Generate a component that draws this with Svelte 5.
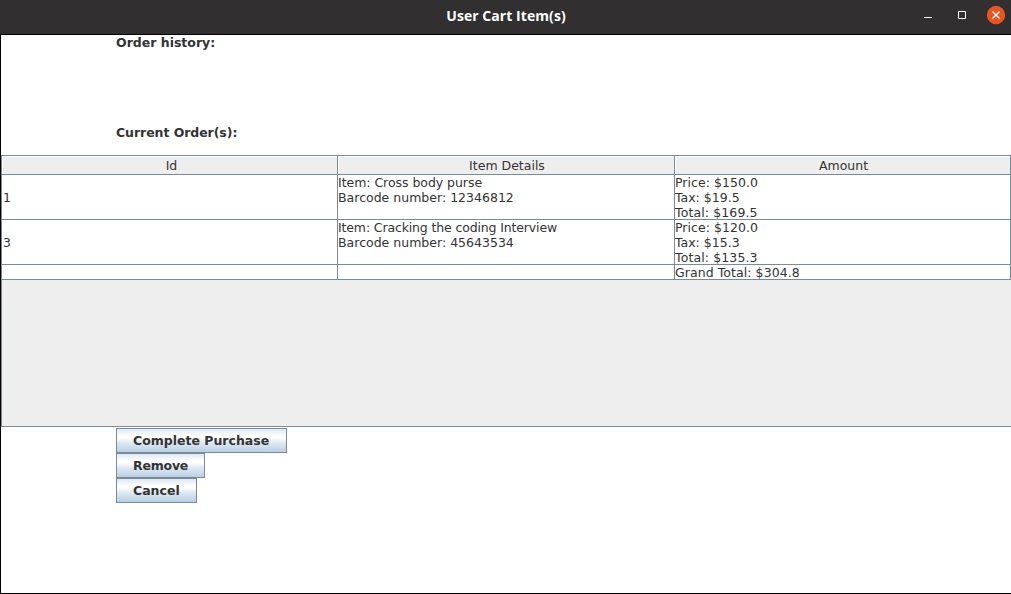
<script>
  const columns = ['Id', 'Item Details', 'Amount'];
  const rows = [
    {
      id: '1',
      details: [{ text: 'Item: Cross body purse', gap: -0.04 }, { text: 'Barcode number: 12346812', gap: 0.01 }],
      amount: [{ text: 'Price: $150.0', gap: 0.05 }, { text: 'Tax: $19.5', gap: 0 }, { text: 'Total: $169.5', gap: 0.12 }]
    },
    {
      id: '3',
      details: [{ text: 'Item: Cracking the coding Interview', gap: -0.14 }, { text: 'Barcode number: 45643534', gap: 0.01 }],
      amount: [{ text: 'Price: $120.0', gap: 0.05 }, { text: 'Tax: $15.3', gap: 0 }, { text: 'Total: $135.3', gap: 0.12 }]
    },
    { id: '', details: [], amount: [{ text: 'Grand Total: $304.8', gap: 0.07 }] }
  ];
</script>

{#snippet lines(items)}
  {#each items as item}
    <div class="line" style="letter-spacing: {item.gap}px">{item.text}</div>
  {/each}
{/snippet}

<div class="window">
  <header>
    <h1>User Cart Item(s)</h1>
    <div class="controls">
      <svg width="84" height="20" viewBox="0 0 84 20" aria-hidden="true">
        <path d="M2 12h8v1H2z" fill="#fff" />
        <path d="M36.5 6.5h7v7h-7z" fill="none" stroke="#fff" />
        <circle cx="74" cy="10" r="9.2" fill="#e95420" />
        <path d="M70.4 6.4l7.2 7.2M77.6 6.4l-7.2 7.2" stroke="#fff" stroke-width="1.4" />
      </svg>
    </div>
  </header>
  <main>
    <div class="label history">Order history:</div>
    <div class="label current">Current Order(s):</div>
    <section class="pane">
      <div class="row head">
        {#each columns as column}
          <div class="cell">{column}</div>
        {/each}
      </div>
      {#each rows as row}
        <div class="row">
          <div class="cell id">{row.id}</div>
          <div class="cell">{@render lines(row.details)}</div>
          <div class="cell">{@render lines(row.amount)}</div>
        </div>
      {/each}
    </section>
    <div class="actions">
      <button class="purchase">Complete Purchase</button>
      <button class="remove">Remove</button>
      <button class="cancel">Cancel</button>
    </div>
  </main>
</div>

<style>
  .window {
    width: 1011px;
    height: 594px;
    box-sizing: border-box;
    display: flex;
    flex-direction: column;
    overflow: hidden;
    background: #fff;
    color: #333;
    font: 12.5px/15px "DejaVu Sans", sans-serif;
  }
  header {
    flex: none;
    box-sizing: border-box;
    height: 35px;
    display: grid;
    grid-template-columns: 1fr auto 1fr;
    align-items: start;
    background: #322f30;
    border-bottom: 1px solid #000;
    padding: 5px 5px 0 6px;
  }
  h1 {
    grid-column: 2;
    margin: 0;
    color: #fff;
    font: bold 14px/21px "Open Sans", sans-serif;
    letter-spacing: 0.06px;
    white-space: nowrap;
  }
  .controls { justify-self: end; height: 20px; }
  svg { display: block; }
  main {
    flex: 1;
    border-left: 1px solid #000;
    border-bottom: 1px solid #000;
  }
  .label {
    padding: 0 0 0 115px;
    font-weight: bold;
    box-sizing: border-box;
  }
  .history { height: 90px; }
  .current { height: 30px; letter-spacing: -0.06px; }
  .pane {
    box-sizing: border-box;
    height: 272px;
    border: solid #7a8a99;
    border-width: 1px 0 1px 1px;
    background: #eee;
  }
  .row {
    display: grid;
    grid-template-columns: 336px 337px 336px;
    background: #fff;
  }
  .cell {
    box-sizing: border-box;
    min-height: 15px;
    border: solid #7a8a99;
    border-width: 0 1px 1px 0;
    white-space: nowrap;
  }
  .line { height: 15px; }
  .line:last-child { margin-bottom: -1px; }
  .id { display: flex; align-items: center; padding: 1px 0 0 1px; }
  .head .cell {
    height: 19px;
    padding: 2px 0 0 2px;
    line-height: 15px;
    text-align: center;
    background: #eee;
    box-shadow: inset 1px 1px #fff;
  }
  .head .cell:first-child { padding-left: 4px; }
  .actions {
    display: flex;
    flex-direction: column;
    align-items: flex-start;
    padding: 1px 0 0 115px;
  }
  button {
    box-sizing: border-box;
    height: 25px;
    padding: 0 0 0 16px;
    border: 1px solid #7a8a99;
    border-radius: 0;
    background: linear-gradient(#dde8f3 0%, #fff 30%, #fff 38%, #dce7f2 62%, #b8cfe5 100%);
    color: #333;
    font: bold 12.5px/15px "DejaVu Sans", sans-serif;
    text-align: left;
    white-space: nowrap;
  }
  .purchase { width: 171px; }
  .remove { width: 89px; letter-spacing: -0.2px; }
  .cancel { width: 81px; }
</style>
